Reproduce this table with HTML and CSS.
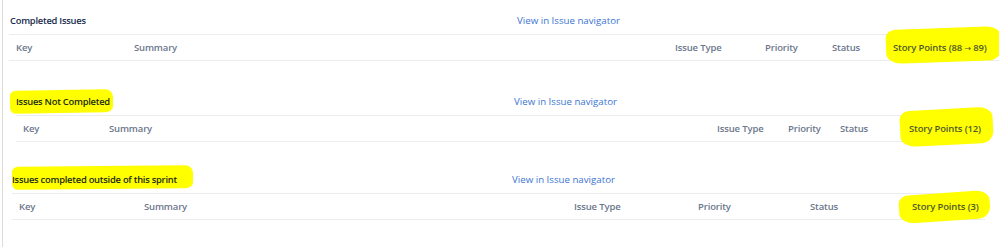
FILE: index.html
```html
<!DOCTYPE html>
<html>
<head>
<meta charset="utf-8">
<link rel="stylesheet" href="styles.css">
</head>
<body>
<div class="page">
  <section class="sec sec1">
    <div class="title-row">
      <h2 class="title">Completed Issues</h2>
      <a class="nav-link" href="#">View in Issue navigator</a>
    </div>
    <div class="head-row">
      <span class="col">Key</span>
      <span class="col">Summary</span>
      <span class="col">Issue Type</span>
      <span class="col">Priority</span>
      <span class="col">Status</span>
      <span class="col sp">Story Points (88 <span class="arrow">→</span> 89)</span>
    </div>
  </section>
  <section class="sec sec2">
    <div class="title-row">
      <h2 class="title hl">Issues Not Completed</h2>
      <a class="nav-link" href="#">View in Issue navigator</a>
    </div>
    <div class="head-row">
      <span class="col">Key</span>
      <span class="col">Summary</span>
      <span class="col">Issue Type</span>
      <span class="col">Priority</span>
      <span class="col">Status</span>
      <span class="col sp">Story Points (12)</span>
    </div>
  </section>
  <section class="sec sec3">
    <div class="title-row">
      <h2 class="title hl">Issues completed outside of this sprint</h2>
      <a class="nav-link" href="#">View in Issue navigator</a>
    </div>
    <div class="head-row">
      <span class="col">Key</span>
      <span class="col">Summary</span>
      <span class="col">Issue Type</span>
      <span class="col">Priority</span>
      <span class="col">Status</span>
      <span class="col sp">Story Points (3)</span>
    </div>
  </section>
</div>
</body>
</html>
```
FILE: styles.css
```css
html, body {
  margin: 0;
  padding: 0;
  background: #ffffff;
}
body {
  font-family: "Open Sans", "Noto Sans", sans-serif;
  color: #172b4d;
}
.page {
  margin-left: 2px;
  border-left: 1px solid #dcdcdc;
  height: 247px;
  box-sizing: border-box;
  padding-top: 6px;
}
.sec {
  position: relative;
}
.title-row {
  display: flex;
  align-items: center;
  height: 28px;
}
.title {
  margin: 0;
  font-size: 9.4px;
  font-weight: 600;
  letter-spacing: -0.25px;
  color: #172b4d;
  position: relative;
  z-index: 1;
  flex: none;
}
.nav-link {
  font-size: 9.7px;
  color: #3a74d4;
  text-decoration: none;
}
.head-row {
  display: grid;
  align-items: center;
  height: 25px;
  border-top: 1px solid #ebecf0;
  border-bottom: 1px solid #ebecf0;
  padding-left: 7px;
}
.col {
  font-size: 9.5px;
  font-weight: 600;
  letter-spacing: -0.15px;
  color: #6b778c;
  white-space: nowrap;
  position: relative;
  z-index: 1;
}
.arrow {
  font-family: "DejaVu Sans", sans-serif;
  font-size: 8px;
  font-weight: 400;
}
.sp {
  color: #4f5a2c;
}
.sp::before {
  content: "";
  position: absolute;
  z-index: -1;
  background: #ffff00;
  border-radius: 10px 14px 12px 16px / 8px 10px 12px 10px;
}
.hl::before {
  content: "";
  position: absolute;
  z-index: -1;
  background: #ffff00;
  border-radius: 6px 8px 8px 5px / 5px 7px 6px 6px;
}

/* section 1 */
.sec1 .title-row { padding-left: 7px; }
.sec1 .title { width: 507px; }
.sec1 .head-row {
  margin-left: 6px;
  grid-template-columns: 118px 541px 90px 67px 61px 1fr;
}
.sec1 .sp::before {
  left: -7px; right: -2px; top: -13px; bottom: -8px;
  transform: rotate(-2deg);
}

/* section 2 */
.sec2 { margin-top: 26px; }
.sec2 .title-row { padding-left: 13px; }
.sec2 .title { width: 498px; color: #1c2a10; }
.sec2 .hl::before {
  left: -6px; width: 103px; top: -5px; bottom: -5px;
  transform: rotate(-1deg);
}
.sec2 .head-row {
  margin-left: 13px;
  margin-right: 14px;
  grid-template-columns: 86px 608px 71px 52px 69px 1fr;
}
.sec2 .sp::before {
  left: -9px; right: -8px; top: -13px; bottom: -10px;
  transform: rotate(-3deg);
}

/* section 3 */
.sec3 { margin-top: 23px; }
.sec3 .title-row { padding-left: 9px; }
.sec3 .title { width: 500px; color: #1c2a10; }
.sec3 .hl::before {
  left: 0; width: 181px; top: -7px; bottom: -3px;
  transform: rotate(-0.5deg);
}
.sec3 .head-row {
  margin-left: 9px;
  margin-right: 14px;
  grid-template-columns: 125px 430px 124px 112px 102px 1fr;
}
.sec3 .sp::before {
  left: -13px; right: -5px; top: -7px; bottom: -8px;
  transform: rotate(-4deg);
}
```
